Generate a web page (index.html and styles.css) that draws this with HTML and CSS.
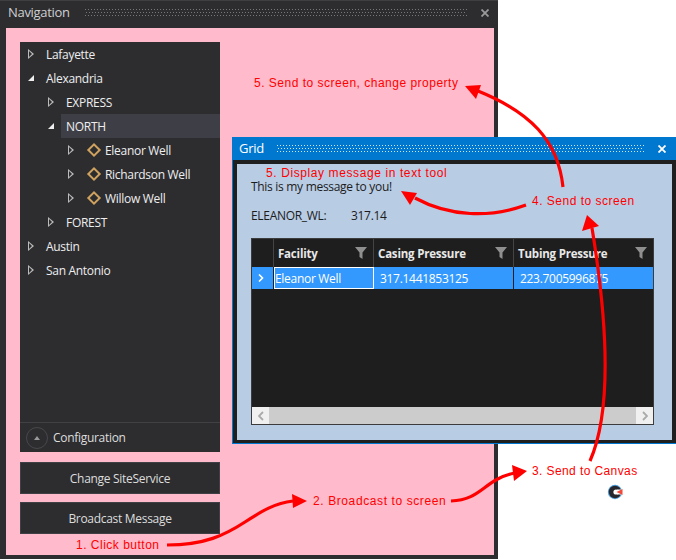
FILE: index.html
```html
<!DOCTYPE html>
<html lang="en">
<head>
    <meta charset="UTF-8">
    <meta name="viewport" content="width=device-width, initial-scale=1.0">
    <title>Broadcast message walkthrough</title>
    <link rel="stylesheet" href="styles.css">
</head>
<body>

<!-- Navigation window -->
<div class="window nav-window">
    <div class="titlebar">
        <span class="title">Navigation</span>
        <span class="grip"></span>
        <svg class="close" viewBox="0 0 8 8"><path d="M0.5 0.5L7.5 7.5M7.5 0.5L0.5 7.5"/></svg>
    </div>
    <div class="nav-body">
        <div class="tree-panel">
            <div class="tree">
                <div class="row lvl1"><i class="arrow open"></i><span>Lafayette</span></div>
                <div class="row lvl1"><i class="arrow down"></i><span>Alexandria</span></div>
                <div class="row lvl2"><i class="arrow open"></i><span>EXPRESS</span></div>
                <div class="row lvl2"><i class="arrow down"></i><span class="selected">NORTH</span></div>
                <div class="row lvl3"><i class="arrow open"></i><i class="diamond"></i><span>Eleanor Well</span></div>
                <div class="row lvl3"><i class="arrow open"></i><i class="diamond"></i><span>Richardson Well</span></div>
                <div class="row lvl3"><i class="arrow open"></i><i class="diamond"></i><span>Willow Well</span></div>
                <div class="row lvl2"><i class="arrow open"></i><span>FOREST</span></div>
                <div class="row lvl1"><i class="arrow open"></i><span>Austin</span></div>
                <div class="row lvl1"><i class="arrow open"></i><span>San Antonio</span></div>
            </div>
            <div class="config">
                <span class="config-btn"><i class="up"></i></span>
                <span>Configuration</span>
            </div>
        </div>
        <div class="btn">Change SiteService</div>
        <div class="btn">Broadcast Message</div>
    </div>
</div>

<!-- Grid window -->
<div class="window grid-window">
    <div class="titlebar">
        <span class="title">Grid</span>
        <span class="grip"></span>
        <svg class="close" viewBox="0 0 8 8"><path d="M0.5 0.5L7.5 7.5M7.5 0.5L0.5 7.5"/></svg>
    </div>
    <div class="grid-frame">
        <div class="grid-body">
            <p class="message">This is my message to you!</p>
            <p class="value"><span class="value-name">ELEANOR_WL:</span><span>317.14</span></p>
            <div class="table">
                <div class="thead">
                    <div class="cell c0"></div>
                    <div class="cell c1"><b>Facility</b><svg class="funnel" viewBox="0 0 12 12"><path d="M0 0H12L7.5 5.5V12L4.5 10V5.5Z"/></svg></div>
                    <div class="cell c2"><b>Casing Pressure</b><svg class="funnel" viewBox="0 0 12 12"><path d="M0 0H12L7.5 5.5V12L4.5 10V5.5Z"/></svg></div>
                    <div class="cell c3"><b>Tubing Pressure</b><svg class="funnel" viewBox="0 0 12 12"><path d="M0 0H12L7.5 5.5V12L4.5 10V5.5Z"/></svg></div>
                </div>
                <div class="tbody-row">
                    <div class="cell c0"><svg class="chev" viewBox="0 0 6 8"><path d="M1 0.5L4.5 4L1 7.5"/></svg></div>
                    <div class="cell c1 editing">Eleanor Well</div>
                    <div class="cell c2">317.1441853125</div>
                    <div class="cell c3">223.7005996875</div>
                </div>
                <div class="table-empty"></div>
                <div class="hscroll">
                    <span class="scroll-btn"><svg viewBox="0 0 6 10"><path d="M5 1L1 5L5 9"/></svg></span>
                    <span class="scroll-btn"><svg viewBox="0 0 6 10"><path d="M1 1L5 5L1 9"/></svg></span>
                </div>
            </div>
        </div>
    </div>
</div>

<!-- Cursor logo -->
<svg class="cursor-logo" viewBox="0 0 16 16">
    <circle cx="8" cy="8" r="7.2" fill="#4f9fdc"/>
    <circle cx="8" cy="8" r="6.2" fill="#26262c"/>
    <circle cx="9" cy="8" r="2.6" fill="#fff"/>
    <path d="M10 5.5H16V10.5H10Z" fill="#fff"/>
    <path d="M9.5 8L15.5 5V11Z" fill="#f04a3a"/>
</svg>

<!-- Annotation arrows -->
<svg class="arrows" viewBox="0 0 676 560">
    <g class="curve">
        <path d="M167 545C205 545 225 535 245 522C262 511 275 503 293 501"/>
        <path d="M451 501C482 500 484 479 515 473"/>
        <path d="M590 461C608 420 612 350 592 228"/>
        <path d="M563 187C558 140 530 112 478 91"/>
        <path d="M526 205C490 218 450 217 415 198"/>
    </g>
    <g class="head">
        <polygon points="307,501 292,494 293,508"/>
        <polygon points="527,471 512,465 514,481"/>
        <polygon points="587,215 582,231 599,226"/>
        <polygon points="465,86 481,85 476,99"/>
        <polygon points="401,191 417,193 410,205"/>
    </g>
</svg>

<!-- Annotation labels -->
<span class="note n1">1. Click button</span>
<span class="note n2">2. Broadcast to screen</span>
<span class="note n3">3. Send to Canvas</span>
<span class="note n4">4. Send to screen</span>
<span class="note n5">5. Send to screen, change property</span>
<span class="note n6">5. Display message in text tool</span>

</body>
</html>
```

FILE: styles.css
```css
body { margin: 0; width: 676px; height: 560px; overflow: hidden; background: #fff; font-family: "Open Sans", Arial, sans-serif; font-size: 12px; letter-spacing: -.3px; position: relative; }
p { margin: 0; }
i { font-style: normal; display: block; }

.window { position: absolute; box-sizing: border-box; display: flex; flex-direction: column; }
.titlebar { display: flex; align-items: center; flex: none; }
.title { font-size: 13px; margin-bottom: 2px; }
.grip { flex: 1; height: 7px; --dot: #777; background-image: conic-gradient(at 1px 1px, transparent 75%, var(--dot) 0), conic-gradient(at 1px 1px, transparent 75%, var(--dot) 0); background-size: 3px 6px; background-position: 0 0, 1px 3px; }
.close { width: 8px; height: 8px; margin-left: 14px; fill: none; stroke-width: 1.8; flex: none; }

/* navigation */
.nav-window { left: 0; top: 0; width: 498px; height: 559px; background: #2d2d30; border-top: 1px solid #3f3f42; }
.nav-window .titlebar { height: 23px; padding: 0 9px 0 8px; color: #d0d0d0; }
.nav-window .title { width: 77px; }
.nav-window .close { stroke: #9a9a9a; }
.nav-body { flex: 1; margin: 4px 4px 4px 6px; background: #ffbbcb; padding: 14px 0 0 14px; }
.tree-panel { width: 200px; height: 410px; background: #2d2d30; display: flex; flex-direction: column; }
.tree { flex: 1; }
.row { height: 24px; display: flex; align-items: center; color: #eee; position: relative; }
.lvl1 { padding-left: 8px; }
.lvl2 { padding-left: 28px; }
.lvl3 { padding-left: 48px; }
.arrow { width: 0; height: 0; margin-right: 12px; }
.arrow.open { border-left: 6px solid #bbb; border-top: 5px solid transparent; border-bottom: 5px solid transparent; position: relative; }
.arrow.open::after { content: ""; position: absolute; left: -5px; top: -3px; border-left: 3.5px solid #2d2d30; border-top: 3px solid transparent; border-bottom: 3px solid transparent; }
.arrow.down { border-bottom: 6px solid #eee; border-left: 6px solid transparent; }
.selected { flex: 1; align-self: stretch; display: flex; align-items: center; background: #3e3f46; margin-left: -5px; padding-left: 5px; }
.lvl3 .arrow { margin-right: 15px; }
.diamond { width: 6px; height: 6px; border: 2px solid #cfa35f; transform: rotate(45deg); margin-right: 6px; }
.config { height: 29px; border-top: 1px solid #414145; display: flex; align-items: center; gap: 5px; padding-left: 6px; color: #ddd; }
.config-btn { width: 22px; height: 22px; box-sizing: border-box; border: 1px solid #48484c; border-radius: 50%; display: flex; align-items: center; justify-content: center; }
.up { width: 0; height: 0; border-left: 3.5px solid transparent; border-right: 3.5px solid transparent; border-bottom: 4px solid #999; }
.btn { width: 200px; height: 32px; box-sizing: border-box; margin-top: 10px; background: #2d2d30; border: 1px solid #3f3f46; color: #ddd; display: flex; align-items: center; justify-content: center; }
.btn + .btn { margin-top: 8px; }

/* grid */
.grid-window { left: 232px; top: 137px; width: 444px; height: 307px; background: #1f1f1f; border: 1px solid #0078d0; border-width: 0 0 1px 1px; }
.grid-window .titlebar { height: 23px; margin-left: -1px; padding: 0 10px 0 7px; color: #fff; background: #0078d0; }
.grid-window .title { width: 38px; }
.grid-window .grip { --dot: #cfe6fa; }
.grid-window .close { stroke: #fff; }
.grid-frame { flex: 1; padding: 4px 4px 3px; }
.grid-body { height: 100%; box-sizing: border-box; background: #b8cce4; padding: 16px 18px 14px 14px; color: #1c1c1c; }
.message { line-height: 14px; }
.value { margin-top: 14px; line-height: 16px; display: flex; }
.value-name { width: 100px; }
.table { margin-top: 14px; height: 187px; background: #1e1e1e; border: 1px solid #3c3c3c; box-sizing: border-box; display: flex; flex-direction: column; }
.thead, .tbody-row { display: flex; flex: none; }
.thead { height: 28px; color: #e8e8e8; }
.thead b { font-size: 11.5px; letter-spacing: -.2px; }
.tbody-row { height: 22px; background: #3399ff; color: #fff; }
.cell { box-sizing: border-box; display: flex; align-items: center; overflow: hidden; white-space: nowrap; border-right: 1px solid #444; }
.tbody-row .cell { border-right-color: #1e1e1e; padding-left: 6px; }
.c0 { width: 22px; }
.c1 { width: 100px; padding-left: 4px; }
.c2 { width: 140px; padding-left: 4px; }
.c3 { width: 139px; padding-left: 4px; border-right: 0; }
.tbody-row .editing { border: 1px solid #fff; padding-left: 0; }
.funnel { width: 12px; height: 12px; margin-left: auto; margin-right: 6px; fill: #8f8f8f; flex: none; }
.chev { width: 6px; height: 8px; fill: none; stroke: #fff; stroke-width: 1.6; }
.table-empty { flex: 1; }
.hscroll { height: 17px; background: #ccc; display: flex; justify-content: space-between; flex: none; }
.scroll-btn { width: 17px; background: #f0f0f0; display: flex; align-items: center; justify-content: center; }
.scroll-btn svg { width: 6px; height: 10px; fill: none; stroke: #aaa; stroke-width: 1.8; }

/* overlay */
.arrows { position: absolute; left: 0; top: 0; width: 676px; height: 560px; pointer-events: none; }
.curve path { fill: none; stroke: #f00; stroke-width: 3.2; }
.head polygon { fill: #f00; }
.cursor-logo { position: absolute; left: 607px; top: 484px; width: 16px; height: 16px; }
.note { position: absolute; color: #f00; font-family: "Liberation Sans", Arial, sans-serif; font-size: 12px; letter-spacing: .5px; line-height: 14px; white-space: nowrap; }
.n1 { left: 76px; top: 538px; }
.n2 { left: 313px; top: 494px; letter-spacing: .6px; }
.n3 { left: 532px; top: 464px; letter-spacing: .4px; }
.n4 { left: 532px; top: 194px; }
.n5 { left: 254px; top: 76px; }
.n6 { left: 266px; top: 166px; letter-spacing: .6px; }
```
